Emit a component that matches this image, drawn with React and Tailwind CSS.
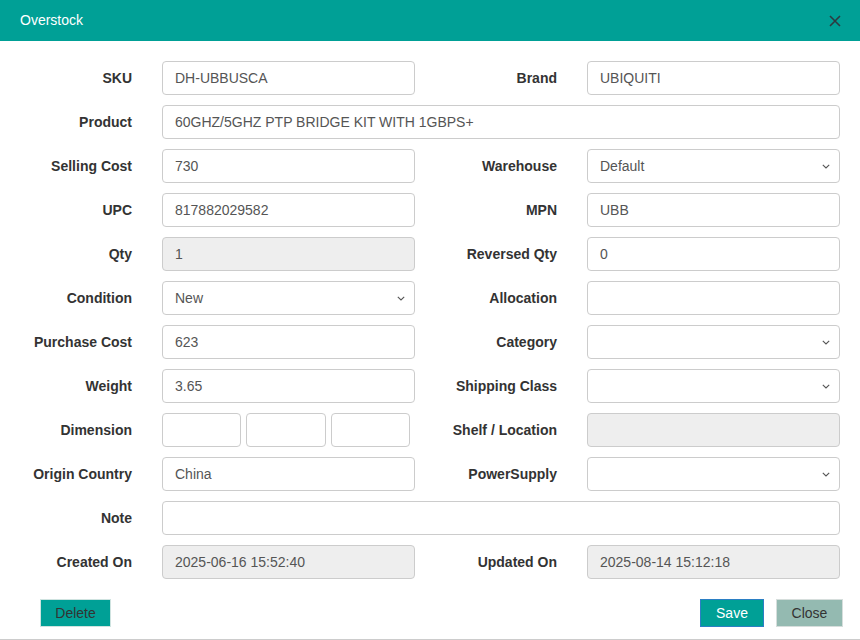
import React from 'react';

const Chevron = () => (
  <svg width="8" height="5" viewBox="0 0 8 5" className="ml-auto mr-[-3px]">
    <path d="M0.8 0.8 L4 4 L7.2 0.8" fill="none" stroke="#555" strokeWidth="1.1" />
  </svg>
);

const Field = ({ value = '', disabled, select, className = 'w-[253px]' }) => (
  <div
    className={`h-[34px] flex items-center px-3 border border-[#ccc] rounded-[4px] text-[14px] text-[#555] ${
      disabled ? 'bg-[#eee]' : 'bg-white'
    } ${className}`}
  >
    <span>{value}</span>
    {select && <Chevron />}
  </div>
);

const Label = ({ children, wide }) => (
  <div className={`${wide ? 'w-[142px]' : 'w-[132px]'} text-right font-bold text-[14px] text-[#333] mr-[30px] shrink-0`}>
    {children}
  </div>
);

const rows = [
  [{ label: 'SKU', value: 'DH-UBBUSCA' }, { label: 'Brand', value: 'UBIQUITI' }],
  [{ label: 'Selling Cost', value: '730' }, { label: 'Warehouse', value: 'Default', select: true }],
  [{ label: 'UPC', value: '817882029582' }, { label: 'MPN', value: 'UBB' }],
  [{ label: 'Qty', value: '1', disabled: true }, { label: 'Reversed Qty', value: '0' }],
  [{ label: 'Condition', value: 'New', select: true }, { label: 'Allocation', value: '' }],
  [{ label: 'Purchase Cost', value: '623' }, { label: 'Category', value: '', select: true }],
  [{ label: 'Weight', value: '3.65' }, { label: 'Shipping Class', value: '', select: true }],
];

const Row = ({ children }) => <div className="flex items-center h-[34px] mb-[10px]">{children}</div>;

const Pair = ({ left, right }) => (
  <Row>
    <Label>{left.label}</Label>
    <Field value={left.value} disabled={left.disabled} select={left.select} />
    <Label wide>{right.label}</Label>
    <Field value={right.value} disabled={right.disabled} select={right.select} />
  </Row>
);

export default function App() {
  return (
    <div className="w-[860px] h-[640px] bg-white border-b border-[#ccc] font-['Liberation_Sans',Arial,sans-serif]">
      <div className="h-[41px] bg-[#00a096] flex items-center px-5">
        <span className="text-white text-[14px]">Overstock</span>
        <svg width="14" height="14" viewBox="0 0 14 14" className="ml-auto mr-[-2px]">
          <path d="M2 2 L12 12 M12 2 L2 12" stroke="#2d3a40" strokeWidth="1.6" />
        </svg>
      </div>

      <div className="pt-5">
        <Pair left={rows[0][0]} right={rows[0][1]} />
        <Row>
          <Label>Product</Label>
          <Field value="60GHZ/5GHZ PTP BRIDGE KIT WITH 1GBPS+" className="w-[678px]" />
        </Row>
        {rows.slice(1).map((r, i) => (
          <Pair key={i} left={r[0]} right={r[1]} />
        ))}
        <Row>
          <Label>Dimension</Label>
          <div className="w-[253px] flex gap-[5px]">
            <Field className="w-[79px]" />
            <Field className="w-[80px]" />
            <Field className="w-[79px]" />
          </div>
          <Label wide>Shelf / Location</Label>
          <Field disabled />
        </Row>
        <Row>
          <Label>Origin Country</Label>
          <Field value="China" />
          <Label wide>PowerSupply</Label>
          <Field select />
        </Row>
        <Row>
          <Label>Note</Label>
          <Field className="w-[678px]" />
        </Row>
        <Row>
          <Label>Created On</Label>
          <Field value="2025-06-16 15:52:40" disabled />
          <Label wide>Updated On</Label>
          <Field value="2025-08-14 15:12:18" disabled />
        </Row>
      </div>

      <div className="flex items-center mt-[20px] px-10 pr-[17px]">
        <button className="h-[28px] w-[71px] bg-[#00a096] border border-[#cfe3e0] text-[#333] text-[14px]">Delete</button>
        <button className="ml-auto h-[28px] w-[64px] bg-[#00a096] border border-[#2b7fc4] text-white text-[14px]">Save</button>
        <button className="ml-3 h-[28px] w-[67px] bg-[#94bab1] border border-[#d6dedc] text-[#333] text-[14px]">Close</button>
      </div>
    </div>
  );
}
